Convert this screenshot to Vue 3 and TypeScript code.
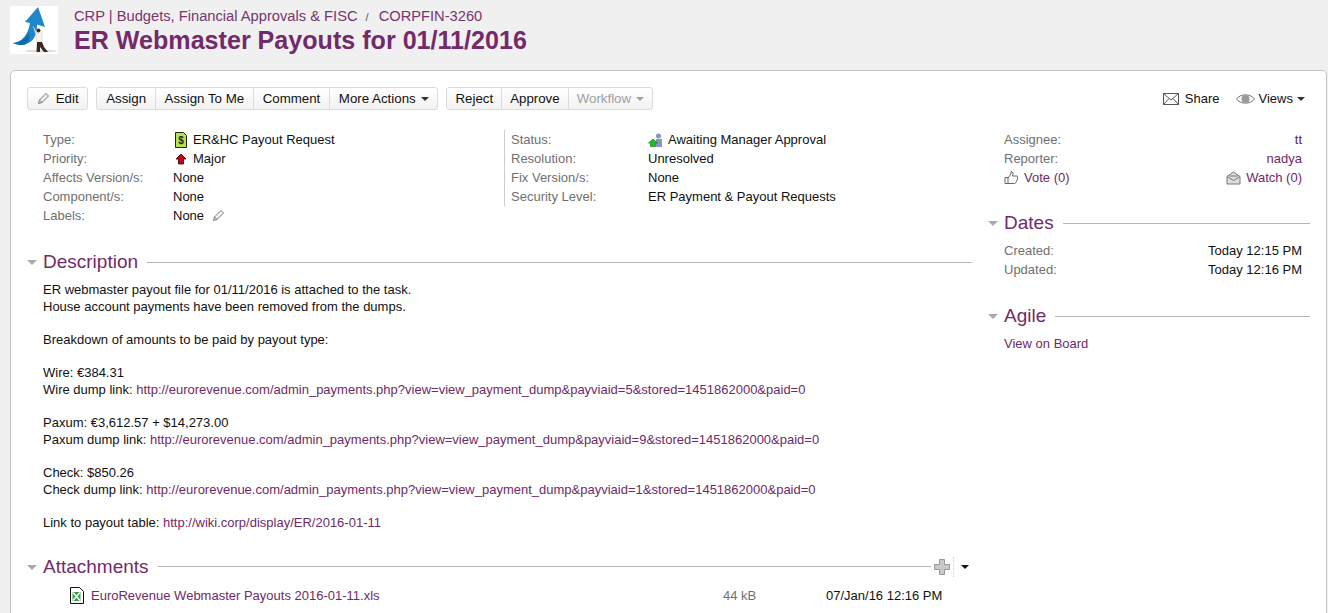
<script setup lang="ts">
interface Row {
  label: string
  value: string
  icon?: string
}

const leftRows: Row[] = [
  { label: 'Type:', value: 'ER&HC Payout Request', icon: 'type' },
  { label: 'Priority:', value: 'Major', icon: 'priority' },
  { label: 'Affects Version/s:', value: 'None' },
  { label: 'Component/s:', value: 'None' },
  { label: 'Labels:', value: 'None', icon: 'labels' }
]

const rightRows: Row[] = [
  { label: 'Status:', value: 'Awaiting Manager Approval', icon: 'status' },
  { label: 'Resolution:', value: 'Unresolved' },
  { label: 'Fix Version/s:', value: 'None' },
  { label: 'Security Level:', value: 'ER Payment & Payout Requests' }
]

const base = 'http://eurorevenue.com/admin_payments.php?view=view_payment_dump&payviaid='
const suffix = '&stored=1451862000&paid=0'
</script>

<template>
  <div class="page">
    <header class="head">
      <svg class="logo" width="48" height="48" viewBox="0 0 48 48">
        <rect width="48" height="48" fill="#fff" />
        <ellipse cx="31" cy="45" rx="16" ry="1.500" fill="#dedede" />
        <path d="M28 1 L35 21 L27 18.500 C27 29 24 36 15 38.500 C10 39.500 6 38.500 3 37 C11 36 18 30 20 17 L15 16Z" fill="#1d87c9" />
        <path d="M3 37 C10 37 16 33 19 26 C20 32 19 36 15 38.500 C10 39.500 6 38.500 3 37Z" fill="#0e6aa8" />
        <path d="M23 20 L27 27 L32 27 L32 36 L27 36 L26 29Z" fill="#f6f3ee" stroke="#bbb" stroke-width=".4" />
        <circle cx="28.500" cy="24.500" r="2" fill="#3d2a1e" />
        <path d="M27 36 L32 36 L34 41 L38 46 L34 46 L30 41 L30 46 L26.500 46Z" fill="#3b281e" />
      </svg>
      <div class="head-text">
        <div class="crumbs">
          <a>CRP | Budgets, Financial Approvals &amp; FISC</a>
          <span class="sep">/</span>
          <a>CORPFIN-3260</a>
        </div>
        <h1>ER Webmaster Payouts for 01/11/2016</h1>
      </div>
    </header>

    <section class="panel">
      <div class="toolbar">
        <div class="btn-group">
          <button class="btn">
            <svg class="pencil" width="13" height="13" viewBox="0 0 13 13">
              <path d="M1.500 11.500 L2.500 8 L9 1.500 L11.500 4 L5 10.500Z M2.500 8 L5 10.500" fill="#f2f2f2" stroke="#777" />
            </svg>
            Edit
          </button>
        </div>
        <div class="btn-group">
          <button class="btn">Assign</button>
          <button class="btn">Assign To Me</button>
          <button class="btn">Comment</button>
          <button class="btn">More Actions <i class="caret"></i></button>
        </div>
        <div class="btn-group tight">
          <button class="btn">Reject</button>
          <button class="btn">Approve</button>
          <button class="btn disabled">Workflow <i class="caret"></i></button>
        </div>
        <div class="tool-right">
          <span class="tool-link">
            <svg width="16" height="12" viewBox="0 0 16 12">
              <path d="M.5.5h15v11H.5z M.5.5 L8 7 L15.5.5 M.5 11.500 L6 5.500 M15.500 11.500 L10 5.500" fill="#fff" stroke="#555" />
            </svg>
            Share
          </span>
          <span class="tool-link views">
            <svg width="19" height="12" viewBox="0 0 19 12">
              <path d="M.5 6 C4 .5 15 .5 18.500 6 C15 11.500 4 11.500 .5 6Z" fill="#fff" stroke="#777" />
              <circle cx="9.500" cy="6" r="4" fill="#999" />
            </svg>
            Views <i class="caret"></i>
          </span>
        </div>
      </div>

      <div class="columns">
        <main class="main">
          <div class="details">
            <dl class="detail-col first">
              <div v-for="row in leftRows" :key="row.label" class="detail-row">
                <dt>{{ row.label }}</dt>
                <dd>
                  <svg v-if="row.icon === 'type'" class="lead-icon" width="16" height="16" viewBox="0 0 16 16">
                    <path d="M2.500.5h8l3 3v12h-11z" fill="#b5e34f" stroke="#222" />
                    <text x="8" y="12" font-size="10" font-weight="700" font-family="Liberation Sans, sans-serif" text-anchor="middle" fill="#222">$</text>
                  </svg>
                  <svg v-if="row.icon === 'priority'" class="lead-icon" width="16" height="16" viewBox="0 0 16 16">
                    <path d="M8 3 L13 8 H10.500 V13 H5.500 V8 H3Z" fill="#c8001e" stroke="#300" stroke-width=".8" />
                  </svg>
                  {{ row.value }}
                  <svg v-if="row.icon === 'labels'" class="label-pencil" width="13" height="13" viewBox="0 0 13 13">
                    <path d="M1.500 11.500 L2.500 8 L9 1.500 L11.500 4 L5 10.500Z M2.500 8 L5 10.500" fill="#f2f2f2" stroke="#777" />
                  </svg>
                </dd>
              </div>
            </dl>
            <dl class="detail-col second">
              <div v-for="row in rightRows" :key="row.label" class="detail-row">
                <dt>{{ row.label }}</dt>
                <dd>
                  <svg v-if="row.icon === 'status'" class="lead-icon" width="16" height="16" viewBox="0 0 16 16">
                    <circle cx="10.500" cy="4" r="2.500" fill="#8a93c4" />
                    <path d="M8 7h6v8H8z" fill="#8a93c4" />
                    <path d="M5 7 L9.500 11 H7.500 V14.500 H2.500 V11 H.5Z" fill="#22b822" stroke="#0a6b0a" stroke-width=".6" />
                  </svg>
                  {{ row.value }}
                </dd>
              </div>
            </dl>
          </div>

          <div class="mod-head description-head">
            <i class="twixie"></i>
            <h2>Description</h2>
            <span class="rule"></span>
          </div>
          <div class="description">
            <p>ER webmaster payout file for 01/11/2016 is attached to the task.<br />House account payments have been removed from the dumps.</p>
            <p>Breakdown of amounts to be paid by payout type:</p>
            <p>Wire: €384.31<br />Wire dump link: <a>{{ base }}5{{ suffix }}</a></p>
            <p>Paxum: €3,612.57 + $14,273.00<br />Paxum dump link: <a>{{ base }}9{{ suffix }}</a></p>
            <p>Check: $850.26<br />Check dump link: <a>{{ base }}1{{ suffix }}</a></p>
            <p>Link to payout table: <a>http://wiki.corp/display/ER/2016-01-11</a></p>
          </div>

          <div class="mod-head attach-head">
            <i class="twixie"></i>
            <h2>Attachments</h2>
            <span class="rule"></span>
            <svg class="plus" width="16" height="16" viewBox="0 0 16 16">
              <path d="M5.500.5h5v5h5v5h-5v5h-5v-5h-5v-5h5z" fill="#c8c8c8" stroke="#999" />
            </svg>
            <span class="attach-menu"><i class="caret dark"></i></span>
          </div>
          <div class="attachment">
            <svg class="xls" width="16" height="17" viewBox="0 0 16 17">
              <path d="M1.500.5h9l4 4v12h-13z" fill="#fff" stroke="#111" />
              <path d="M3.500 5h8v9h-8z" fill="#3f9a4a" />
              <path d="M4 5.500 L11 13.500 M11 5.500 L4 13.500" stroke="#fff" stroke-width="1.400" />
            </svg>
            <a class="file-name">EuroRevenue Webmaster Payouts 2016-01-11.xls</a>
            <span class="file-size">44 kB</span>
            <span class="file-date">07/Jan/16 12:16 PM</span>
          </div>
        </main>

        <aside class="side">
          <div class="people">
            <div class="side-row"><span class="side-label">Assignee:</span><a class="dark-link">tt</a></div>
            <div class="side-row"><span class="side-label">Reporter:</span><a>nadya</a></div>
            <div class="side-row">
              <a class="with-icon">
                <svg width="15" height="15" viewBox="0 0 15 15">
                  <path d="M1 7.500h3v6H1z M4 8 L7 4 V1.500 C9 1.500 9.500 3.500 8.500 6 H13 C14 6 14 8 13 8 C14 8.500 14 10 12.500 10.200 C13 11 12.500 12.500 11.500 12.500 C11.500 13.500 11 13.500 10 13.500 H4" fill="#fff" stroke="#666" />
                </svg>
                Vote (0)
              </a>
              <a class="with-icon">
                <svg width="15" height="14" viewBox="0 0 15 14">
                  <path d="M1 5.500 L7.500 1 L14 5.500 V13 H1Z" fill="#ddd" stroke="#777" />
                  <path d="M1 5.500 L7.500 9.500 L14 5.500 M3.500 5 h8" fill="none" stroke="#777" />
                </svg>
                Watch (0)
              </a>
            </div>
          </div>

          <div class="mod-head side-head dates-head">
            <i class="twixie"></i>
            <h2>Dates</h2>
            <span class="rule"></span>
          </div>
          <div class="side-body">
            <div class="side-row"><span class="side-label">Created:</span><span>Today 12:15 PM</span></div>
            <div class="side-row"><span class="side-label">Updated:</span><span>Today 12:16 PM</span></div>
          </div>

          <div class="mod-head side-head agile-head">
            <i class="twixie"></i>
            <h2>Agile</h2>
            <span class="rule"></span>
          </div>
          <div class="side-body agile-body"><a>View on Board</a></div>
        </aside>
      </div>
    </section>
  </div>
</template>

<style>
html,
body {
  margin: 0;
  height: 100%;
  overflow: hidden;
  background: #f0f0f0;
}
</style>

<style scoped>
.page {
  height: 613px;
  overflow: hidden;
  font-family: "Liberation Sans", Arial, sans-serif;
  font-size: 13px;
  color: #111;
  background: #f0f0f0;
}

a {
  color: #6f2a68;
  text-decoration: none;
}

.head {
  display: flex;
  gap: 16px;
  height: 70px;
  padding: 6px 0 0 10px;
  box-sizing: border-box;
}

.logo {
  flex: none;
}

.head-text {
  padding-top: 1px;
}

.crumbs {
  font-size: 14.700px;
  line-height: 18px;
}

.crumbs a {
  color: #77366f;
}

.sep {
  margin: 0 10px 0 8px;
  font-size: 11px;
  color: #555;
}

h1 {
  margin: 0;
  font-size: 25.100px;
  line-height: 28px;
  font-weight: 700;
  color: #732a6b;
}

.panel {
  margin: 0 1px 0 10px;
  height: 560px;
  padding: 16px 16px 0;
  box-sizing: border-box;
  background: #fff;
  border: 1px solid #c4c4c4;
  border-radius: 5px;
}

.toolbar {
  display: flex;
  gap: 8px;
  height: 23px;
}

.btn-group {
  display: flex;
  border: 1px solid #dcdcdc;
  border-radius: 3px;
  background: linear-gradient(#fff, #f2f2f2);
}

.btn {
  display: flex;
  align-items: center;
  gap: 5px;
  height: 21px;
  padding: 0 8.750px;
  border: 0;
  border-left: 1px solid #dcdcdc;
  background: none;
  font: inherit;
  font-size: 13.300px;
  color: #111;
}

.btn:first-child {
  border-left: 0;
}

.tight .btn {
  padding: 0 8px;
}

.btn.disabled {
  color: #a0a0a0;
}

.pencil {
  margin-right: 1px;
}

.caret {
  display: inline-block;
  width: 0;
  height: 0;
  border: 4px solid transparent;
  border-top-color: #333;
  border-bottom: 0;
}

.disabled .caret {
  border-top-color: #a0a0a0;
}

.caret.dark {
  border-top-color: #111;
}

.tool-right {
  display: flex;
  align-items: center;
  gap: 16px;
  margin-left: auto;
  padding-right: 5px;
  font-size: 13px;
}

.tool-link {
  display: flex;
  align-items: center;
  gap: 6px;
}

.views {
  gap: 4px;
}

.columns {
  display: flex;
  gap: 16px;
  margin-top: 20px;
}

.main {
  width: 945px;
  flex: none;
}

.details {
  display: flex;
  padding-left: 16px;
  height: 120px;
}

.detail-col {
  margin: 0;
}

.detail-col.first {
  width: 461px;
  --label: 130px;
}

.detail-col.second {
  align-self: flex-start;
  padding-left: 6px;
  border-left: 1px solid #ccc;
  --label: 137px;
}

.detail-row {
  display: flex;
  height: 19px;
  line-height: 19px;
}

dt {
  width: var(--label);
  color: #707070;
}

dd {
  margin: 0;
  display: flex;
  align-items: center;
  gap: 4px;
  color: #111;
}

.lead-icon {
  flex: none;
}

.label-pencil {
  margin-left: 4px;
}

.mod-head {
  position: relative;
  display: flex;
  align-items: center;
  gap: 9px;
  height: 24px;
  padding-left: 16px;
}

.mod-head h2 {
  margin: 0;
  font-size: 19px;
  line-height: 24px;
  font-weight: 400;
  color: #732a6b;
}

.twixie {
  position: absolute;
  left: 0;
  top: 10px;
  width: 0;
  height: 0;
  border: 5px solid transparent;
  border-top-color: #aaa;
  border-bottom: 0;
}

.rule {
  flex: 1;
  height: 1px;
  background: #b5b5b5;
}

.description {
  padding: 8px 0 0 16px;
  line-height: 16.650px;
}

.description p {
  margin: 0 0 16.650px;
}

.attach-head {
  margin-top: 23px;
}

.plus {
  margin-left: -6px;
}

.attach-menu {
  display: flex;
  align-items: center;
  height: 20px;
  margin-left: -6px;
  padding-left: 7px;
  padding-right: 3px;
  border-left: 1px dotted #ccc;
}

.attachment {
  display: flex;
  align-items: center;
  height: 20px;
  margin-top: 7px;
  padding-left: 42px;
}

.xls {
  margin-right: 6px;
}

.file-name {
  width: 632px;
}

.file-size {
  width: 103px;
  color: #707070;
}

.side {
  flex: 1;
}

.people {
  padding-left: 16px;
  padding-right: 8px;
}

.side-row {
  display: flex;
  justify-content: space-between;
  align-items: center;
  height: 19px;
  line-height: 19px;
}

.side-label {
  color: #707070;
}

.dark-link {
  color: #5a2755;
}

.with-icon {
  display: flex;
  align-items: center;
  gap: 5px;
}

.dates-head {
  margin-top: 24px;
}

.agile-head {
  margin-top: 25px;
}

.side-body {
  padding: 6px 8px 0 16px;
}

.agile-body {
  padding-top: 8px;
}
</style>
